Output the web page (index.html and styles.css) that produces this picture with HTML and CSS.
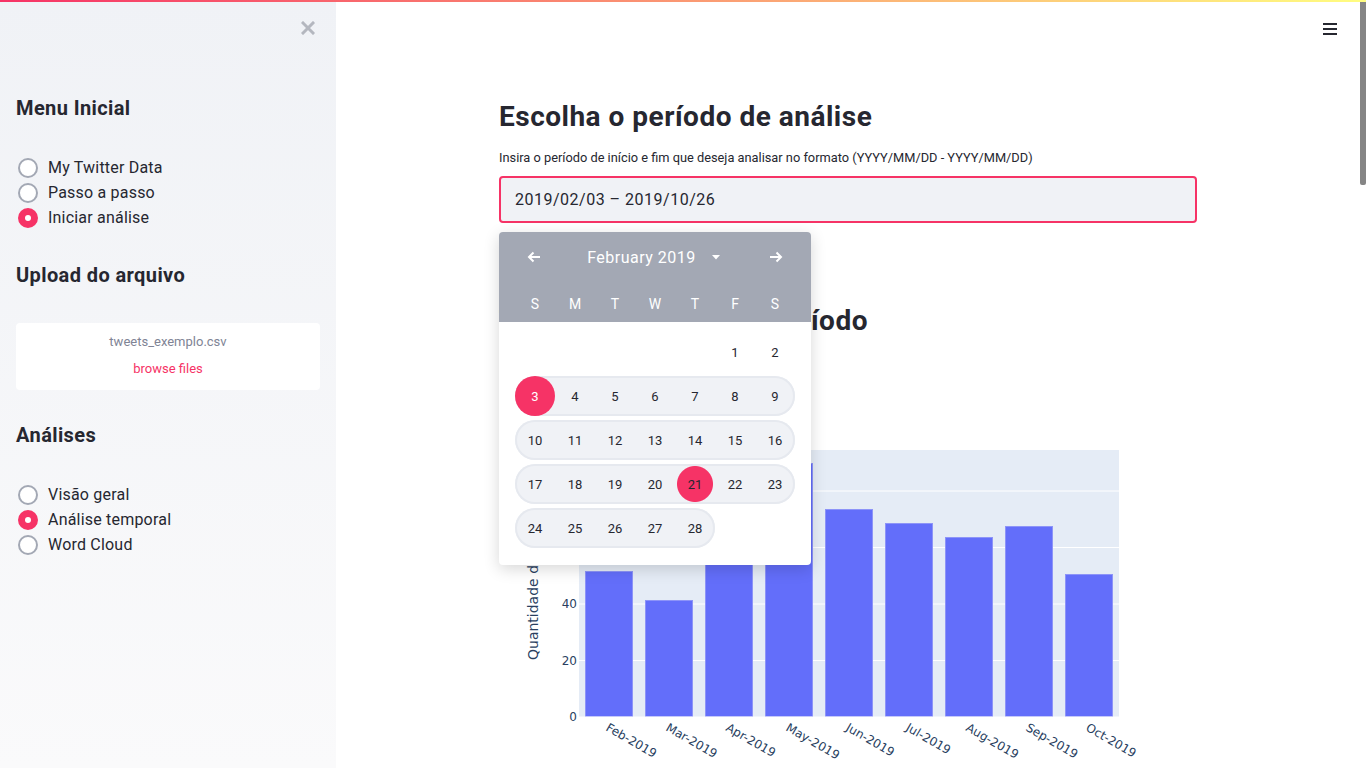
FILE: index.html
```html
<!DOCTYPE html>
<html lang="pt">
<head>
<meta charset="utf-8">
<title>Análise Twitter</title>
<link rel="stylesheet" href="styles.css">
</head>
<body>
<div class="decoration"></div>
<div class="scroll-thumb"></div>
<div class="app">
  <aside class="sidebar">
    <div class="side-top">
      <button class="close-btn" aria-label="Fechar">
        <svg width="14" height="14" viewBox="0 0 14 14"><path d="M2 2 L12 12 M12 2 L2 12" stroke="#b4b7bf" stroke-width="3" stroke-linecap="square"/></svg>
      </button>
    </div>
    <div class="side-content">
      <h3 class="side-title">Menu Inicial</h3>
      <div class="radio-group">
        <label class="radio"><span class="circle"></span><span>My Twitter Data</span></label>
        <label class="radio"><span class="circle"></span><span>Passo a passo</span></label>
        <label class="radio"><span class="circle checked"></span><span>Iniciar análise</span></label>
      </div>
      <h3 class="side-title t2">Upload do arquivo</h3>
      <div class="uploader">
        <div class="fname">tweets_exemplo.csv</div>
        <div class="browse">browse files</div>
      </div>
      <h3 class="side-title t3">Análises</h3>
      <div class="radio-group">
        <label class="radio"><span class="circle"></span><span>Visão geral</span></label>
        <label class="radio"><span class="circle checked"></span><span>Análise temporal</span></label>
        <label class="radio"><span class="circle"></span><span>Word Cloud</span></label>
      </div>
    </div>
  </aside>
  <main class="main">
    <header class="toolbar">
      <button class="menu-btn" aria-label="Menu">
        <svg width="14" height="12" viewBox="0 0 14 12"><rect x="0" y="0" width="14" height="2" fill="#262730"/><rect x="0" y="5" width="14" height="2" fill="#262730"/><rect x="0" y="10" width="14" height="2" fill="#262730"/></svg>
      </button>
    </header>
    <div class="block">
      <h2 class="heading">Escolha o período de análise</h2>
      <div class="field">
        <div class="label">Insira o período de início e fim que deseja analisar no formato (YYYY/MM/DD - YYYY/MM/DD)</div>
        <div class="input-wrap">
          <div class="input">2019/02/03 – 2019/10/26</div>
          <div class="calendar">
            <div class="cal-head">
              <div class="cal-nav">
                <span class="arrow">
                  <svg width="14" height="12" viewBox="0 0 14 12"><path d="M13 6 H2 M6.5 1.5 L2 6 L6.5 10.5" stroke="#fff" stroke-width="2" fill="none"/></svg>
                </span>
                <span class="month">February 2019 <svg class="caret" width="8" height="5" viewBox="0 0 8 5"><path d="M0 0 H8 L4 4.5 Z" fill="#fff"/></svg></span>
                <span class="arrow">
                  <svg width="14" height="12" viewBox="0 0 14 12"><path d="M1 6 H12 M7.5 1.5 L12 6 L7.5 10.5" stroke="#fff" stroke-width="2" fill="none"/></svg>
                </span>
              </div>
              <div class="dow">
                <span>S</span><span>M</span><span>T</span><span>W</span><span>T</span><span>F</span><span>S</span>
              </div>
            </div>
            <div class="cal-body">
              <div class="week">
                <span class="day"></span><span class="day"></span><span class="day"></span><span class="day"></span><span class="day"></span><span class="day">1</span><span class="day">2</span>
              </div>
              <div class="week">
                <div class="range">
                  <span class="day sel">3</span><span class="day">4</span><span class="day">5</span><span class="day">6</span><span class="day">7</span><span class="day">8</span><span class="day">9</span>
                </div>
              </div>
              <div class="week">
                <div class="range">
                  <span class="day">10</span><span class="day">11</span><span class="day">12</span><span class="day">13</span><span class="day">14</span><span class="day">15</span><span class="day">16</span>
                </div>
              </div>
              <div class="week">
                <div class="range">
                  <span class="day">17</span><span class="day">18</span><span class="day">19</span><span class="day">20</span><span class="day hover">21</span><span class="day">22</span><span class="day">23</span>
                </div>
              </div>
              <div class="week">
                <div class="range">
                  <span class="day">24</span><span class="day">25</span><span class="day">26</span><span class="day">27</span><span class="day">28</span>
                </div>
              </div>
            </div>
          </div>
        </div>
      </div>
      <h2 class="heading h2b">Total de tweets por período</h2>
      <div class="chart">
        <svg width="698" height="420" viewBox="0 0 698 420">
          <rect x="80" y="100" width="540" height="267" fill="#e5ecf6"/>
          <g stroke="#ffffff" stroke-width="1">
            <line x1="80" x2="620" y1="310.5" y2="310.5"/>
            <line x1="80" x2="620" y1="254" y2="254"/>
            <line x1="80" x2="620" y1="197.5" y2="197.5"/>
            <line x1="80" x2="620" y1="141" y2="141"/>
          </g>
          <g fill="#636efa" stroke="#8d94f8" stroke-width="1">
            <rect x="86.5" y="221.5" width="47" height="145"/>
            <rect x="146.5" y="250.5" width="47" height="116"/>
            <rect x="206.5" y="190.5" width="47" height="176"/>
            <rect x="266.5" y="113.5" width="47" height="253"/>
            <rect x="326.5" y="159.5" width="47" height="207"/>
            <rect x="386.5" y="173.5" width="47" height="193"/>
            <rect x="446.5" y="187.5" width="47" height="179"/>
            <rect x="506.5" y="176.5" width="47" height="190"/>
            <rect x="566.5" y="224.5" width="47" height="142"/>
          </g>
          <line x1="80" x2="620" y1="367" y2="367" stroke="#ffffff" stroke-width="1"/>
          <g class="tick" text-anchor="end">
            <text x="78" y="371">0</text>
            <text x="78" y="314.5">20</text>
            <text x="78" y="258">40</text>
            <text x="78" y="201.5">60</text>
            <text x="78" y="145">80</text>
          </g>
          <g class="tick">
            <text x="106" y="380" transform="rotate(30 106 380)">Feb-2019</text>
            <text x="166" y="380" transform="rotate(30 166 380)">Mar-2019</text>
            <text x="226" y="380" transform="rotate(30 226 380)">Apr-2019</text>
            <text x="286" y="380" transform="rotate(30 286 380)">May-2019</text>
            <text x="346" y="380" transform="rotate(30 346 380)">Jun-2019</text>
            <text x="406" y="380" transform="rotate(30 406 380)">Jul-2019</text>
            <text x="466" y="380" transform="rotate(30 466 380)">Aug-2019</text>
            <text x="526" y="380" transform="rotate(30 526 380)">Sep-2019</text>
            <text x="586" y="380" transform="rotate(30 586 380)">Oct-2019</text>
          </g>
          <text class="axis-title" x="39" y="310" transform="rotate(-90 39 310)">Quantidade de tweets</text>
        </svg>
      </div>
      <div class="rest"></div>
    </div>
  </main>
</div>
</body>
</html>
```
FILE: styles.css
```css
* { box-sizing: border-box; }
html, body {
  margin: 0;
  padding: 0;
  height: 100%;
  overflow: hidden;
  font-family: "Roboto", "Liberation Sans", sans-serif;
  color: #262730;
  background: #ffffff;
}
button {
  background: none;
  border: 0;
  padding: 0;
  margin: 0;
  cursor: pointer;
  display: flex;
}
.decoration {
  position: fixed;
  top: 0;
  left: 0;
  right: 0;
  height: 2px;
  z-index: 10;
  background-image: linear-gradient(90deg, #f63366, #fffd80);
}
.scroll-thumb {
  position: fixed;
  top: 2px;
  right: 0;
  width: 6px;
  height: 183px;
  background: #858585;
  border-radius: 0 0 2px 2px;
  z-index: 10;
}
.app {
  display: flex;
  height: 100vh;
}
.sidebar {
  width: 336px;
  flex: none;
  height: 100vh;
  background-image: linear-gradient(180deg, #f0f2f6, #fafafb);
}
.side-top {
  display: flex;
  justify-content: flex-end;
  padding: 21px 21px 0 0;
  height: 35px;
}
.side-content {
  padding: 0 16px;
}
.side-title {
  margin: 59px 0 0;
  font-size: 20px;
  line-height: 28px;
  font-weight: 700;
  letter-spacing: 0.4px;
  color: #262730;
}
.side-title.t2, .side-title.t3 { margin-top: 31px; }
.radio-group {
  margin-top: 33px;
  display: flex;
  flex-direction: column;
}
.radio {
  display: flex;
  align-items: center;
  height: 25px;
  gap: 10px;
  font-size: 16px;
  letter-spacing: 0.2px;
  color: #262730;
  padding-left: 2px;
}
.circle {
  width: 20px;
  height: 20px;
  border-radius: 50%;
  border: 2px solid #a3a8b4;
  background: #ffffff;
  flex: none;
  display: flex;
  align-items: center;
  justify-content: center;
}
.circle.checked {
  border-color: #f63366;
  background: #f63366;
}
.circle.checked::after {
  content: "";
  width: 6px;
  height: 6px;
  border-radius: 50%;
  background: #ffffff;
}
.uploader {
  margin-top: 34px;
  width: 304px;
  height: 67px;
  background: #ffffff;
  border-radius: 4px;
  padding-top: 11px;
  text-align: center;
  font-size: 13px;
  line-height: 16px;
}
.fname { color: #808495; }
.browse { color: #f63366; margin-top: 11px; }

.main {
  flex: 1;
  height: 100vh;
  overflow: hidden;
  padding-right: 6px;
  position: relative;
}
.toolbar {
  display: flex;
  justify-content: flex-end;
  padding: 23px 23px 0 0;
  height: 35px;
}
.block {
  width: 730px;
  margin: 0 auto;
  padding: 0 16px;
}
.heading {
  margin: 64px 0 0;
  font-size: 28px;
  line-height: 36px;
  font-weight: 700;
  letter-spacing: 0.5px;
  color: #262730;
}
.field { margin-top: 15px; }
.label {
  font-size: 12.8px;
  line-height: 16px;
  color: #262730;
}
.input-wrap {
  position: relative;
  margin-top: 10px;
}
.input {
  height: 47px;
  border: 2px solid #f63366;
  border-radius: 4px;
  background: #f0f2f6;
  padding: 0 14px;
  display: flex;
  align-items: center;
  font-size: 16px;
  letter-spacing: 0.5px;
}
.calendar {
  position: absolute;
  top: 56px;
  left: 0;
  width: 312px;
  height: 333px;
  background: #ffffff;
  border-radius: 4px;
  box-shadow: 0 4px 16px rgba(0, 0, 0, 0.16);
  z-index: 5;
  overflow: hidden;
}
.cal-head {
  background: #a3a8b4;
  height: 90px;
  padding: 0 16px;
  color: #ffffff;
}
.cal-nav {
  height: 50px;
  display: flex;
  align-items: center;
  justify-content: space-between;
  padding: 0 12px;
}
.arrow { display: flex; }
.month {
  font-size: 16px;
  letter-spacing: 0.5px;
  display: flex;
  align-items: center;
  gap: 16px;
  margin-right: 3px;
}
.dow {
  display: flex;
  height: 40px;
  padding-top: 4px;
  align-items: center;
  font-size: 14px;
}
.dow span {
  width: 40px;
  text-align: center;
}
.cal-body {
  padding: 10px 16px 0;
  display: flex;
  flex-direction: column;
  gap: 4px;
}
.week {
  display: flex;
  height: 40px;
}
.range {
  display: flex;
  background: #f0f2f6;
  box-shadow: inset 0 0 0 2px #e6e9ef;
  border-radius: 20px;
}
.day {
  width: 40px;
  height: 40px;
  display: flex;
  align-items: center;
  justify-content: center;
  font-size: 13px;
  color: #262730;
  flex: none;
}
.day.sel {
  border-radius: 50%;
  background: #f63366;
  color: #ffffff;
}
.day.hover {
  background: radial-gradient(circle, #f63366 17.5px, rgba(246, 51, 102, 0) 18.5px);
}
.h2b { margin-top: 80px; word-spacing: 3px; }
.chart {
  margin-top: 11px;
  height: 420px;
}
.chart svg { display: block; }
.tick {
  font-family: "DejaVu Sans", "Liberation Sans", sans-serif;
  font-size: 12px;
  fill: #2a3f5f;
}
.axis-title {
  font-family: "DejaVu Sans", "Liberation Sans", sans-serif;
  font-size: 14px;
  fill: #2a3f5f;
}
.rest { height: 2453px; }
```
